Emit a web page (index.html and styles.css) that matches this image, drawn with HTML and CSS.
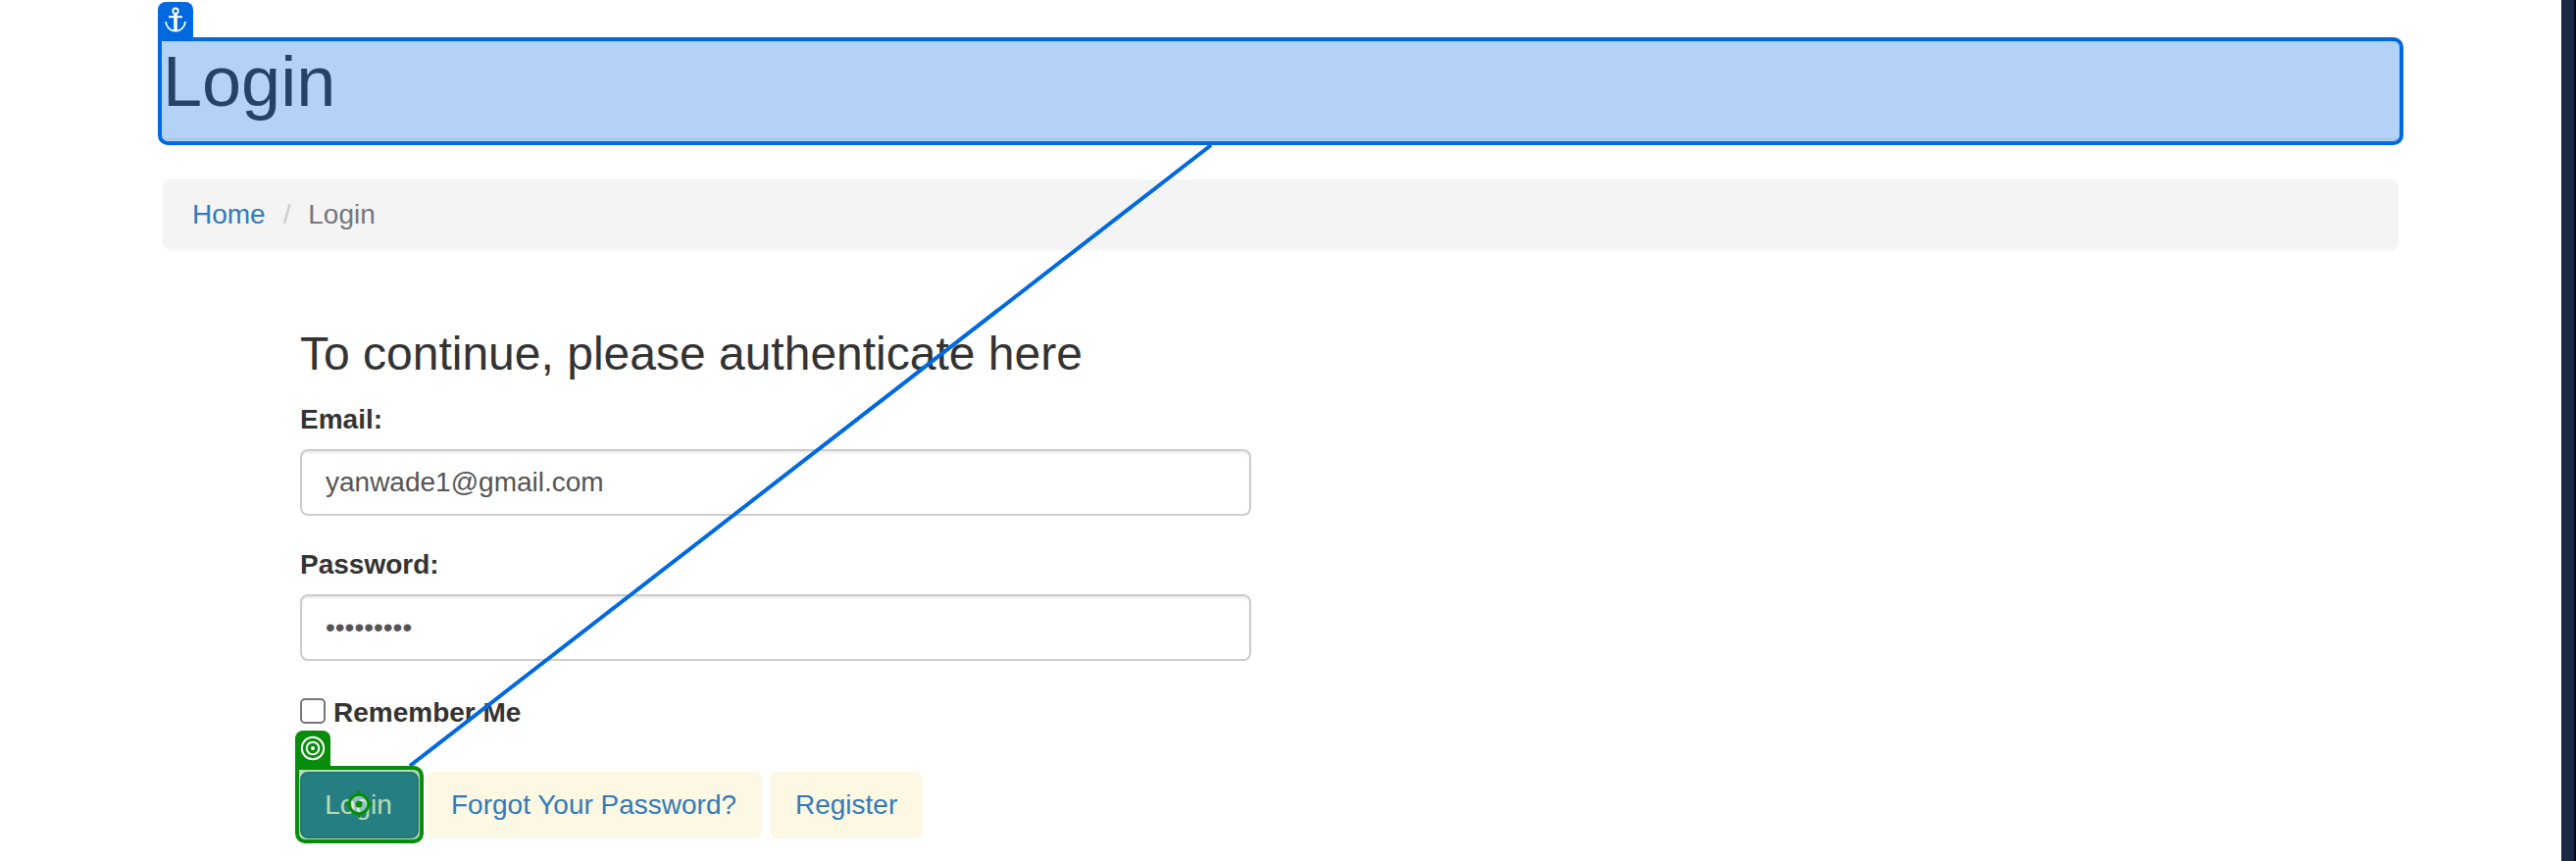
FILE: index.html
```
<!DOCTYPE html>
<html lang="en">
<head>
<meta charset="utf-8">
<title>Login</title>
<link rel="stylesheet" href="styles.css">
</head>
<body>
<div class="page">
  <main class="container">
    <header class="page-header"><h1>Login</h1></header>
    <ol class="breadcrumb">
      <li><a href="#">Home</a></li>
      <li class="active">Login</li>
    </ol>
    <form class="login-form">
      <h3>To continue, please authenticate here</h3>
      <div class="form-group">
        <label for="email">Email:</label>
        <input class="form-control" id="email" type="text" value="yanwade1@gmail.com">
      </div>
      <div class="form-group">
        <label for="password">Password:</label>
        <input class="form-control password" id="password" type="password" value="password1">
      </div>
      <label class="remember"><input type="checkbox"><span>Remember Me</span></label>
      <div class="actions">
        <button class="btn primary" type="button">Login</button>
        <a class="btn link forgot" href="#">Forgot Your Password?</a>
        <a class="btn link register" href="#">Register</a>
      </div>
    </form>
  </main>
</div>
<svg class="connector" viewBox="0 0 2627 878"><line x1="1235" y1="148" x2="418" y2="781"/></svg>
<div class="marker anchor">
  <div class="tab"><svg viewBox="0 0 36 36" fill="none" stroke="#fff">
    <circle cx="18" cy="9.200" r="2.700" stroke-width="1.8"/>
    <path d="M18 12V29" stroke-width="3.600"/>
    <path d="M11 15.2H25" stroke-width="2"/>
    <path d="M8 20C8.6 26.2 13 29.7 18 29.7S27.400 26.2 28 20" stroke-width="1.8"/>
  </svg></div>
</div>
<div class="marker target">
  <div class="tab"><svg viewBox="0 0 36 36" fill="none" stroke="#fff" stroke-width="2">
    <circle cx="18" cy="18" r="11.200"/>
    <circle cx="18" cy="18" r="6.300"/>
    <circle cx="18" cy="18" r="2" fill="#fff" stroke="none"/>
  </svg></div>
  <svg class="crosshair" viewBox="0 0 28 28" fill="none" stroke="#078c0b">
    <circle cx="14" cy="14" r="9.8" fill="rgba(255,255,255,.5)" stroke-width="3"/>
    <circle cx="14" cy="14" r="3.500" fill="#078c0b" stroke="none"/>
    <path d="M14 0V4M14 24V28M0 14H4M24 14H28" stroke-width="2.600"/>
  </svg>
</div>
</body>
</html>
```
FILE: styles.css
```
* { box-sizing: border-box; }
body {
  margin: 0;
  height: 878px;
  overflow: hidden;
  position: relative;
  font: 28px/40px "Liberation Sans", Arial, sans-serif;
  color: #333;
  background: #fff;
}
.page {
  height: 878px;
  padding: 43px 166px 0;
  border-right: 2px solid #030914;
  box-shadow: inset -13px 0 #1b2945;
}
.container { width: 2280px; }
.page-header {
  height: 100px;
  padding-top: 1px;
  border-bottom: 2px solid #eee;
}
h1, h3 { margin: 0; font-weight: 400; line-height: 1.1; }
h1 { font-size: 72px; }
h3 { font-size: 48px; margin-bottom: 20px; }
a { color: #337ab7; text-decoration: none; }
.breadcrumb {
  display: flex;
  list-style: none;
  margin: 40px 0 80px;
  padding: 16px 30px;
  background: #f4f4f4;
  border-radius: 8px;
}
.breadcrumb .active { color: #777; }
.breadcrumb .active::before {
  content: "/\00a0";
  padding: 0 10px 0 18px;
  color: #ccc;
}
.login-form { width: 970px; margin-left: 140px; }
.form-group { margin-bottom: 30px; }
.form-group label { display: block; font-weight: 700; margin-bottom: 10px; }
.form-control {
  display: block;
  width: 100%;
  height: 68px;
  padding: 12px 24px;
  font: 28px/40px "Liberation Sans", Arial, sans-serif;
  color: #555;
  background: #fff;
  border: 2px solid #ccc;
  border-radius: 8px;
  box-shadow: inset 0 2px 2px rgba(0, 0, 0, .075);
}
.remember { display: flex; align-items: flex-start; font-weight: 700; height: 40px; }
.remember input {
  appearance: none;
  width: 26px;
  height: 26px;
  margin: 8px 8px 0 0;
  border: 2px solid #767676;
  border-radius: 5px;
}
.remember span { padding-top: 3px; }
.actions { display: flex; margin-top: 43px; }
.btn {
  height: 68px;
  padding: 12px 24px;
  font: 28px/40px "Liberation Sans", Arial, sans-serif;
  border: 2px solid transparent;
  border-radius: 8px;
  white-space: nowrap;
}
.primary {
  width: 121px;
  padding-right: 25px;
  padding-left: 23px;
  color: #fff;
  background: #337ab7;
  border-color: #2e6da4;
}
.link { background-color: #fcf8e3; }
.forgot { width: 343px; margin-left: 7px; }
.register { width: 156px; margin-left: 8px; }
.connector { position: absolute; left: 0; top: 0; width: 2627px; height: 878px; }
.connector line { stroke: #0069e0; stroke-width: 4; }
.marker { position: absolute; border: 4px solid; border-radius: 0 10px 10px 10px; }
.tab {
  position: absolute;
  left: -4px;
  top: -40px;
  width: 36px;
  height: 36px;
  border-radius: 8px 8px 0 0;
}
.tab svg { display: block; width: 36px; height: 36px; }
.anchor {
  left: 161px;
  top: 38px;
  width: 2290px;
  height: 110px;
  border-color: #0069e0;
  background: rgba(7, 105, 224, .3);
  background-clip: padding-box;
}
.anchor .tab { background: #0069e0; }
.target {
  left: 301px;
  top: 781px;
  width: 131px;
  height: 79px;
  border-color: #078c0b;
  background: rgba(7, 140, 11, .3);
}
.target .tab { background: #078c0b; }
.crosshair { position: absolute; left: 47px; top: 21px; width: 28px; height: 28px; }
```
